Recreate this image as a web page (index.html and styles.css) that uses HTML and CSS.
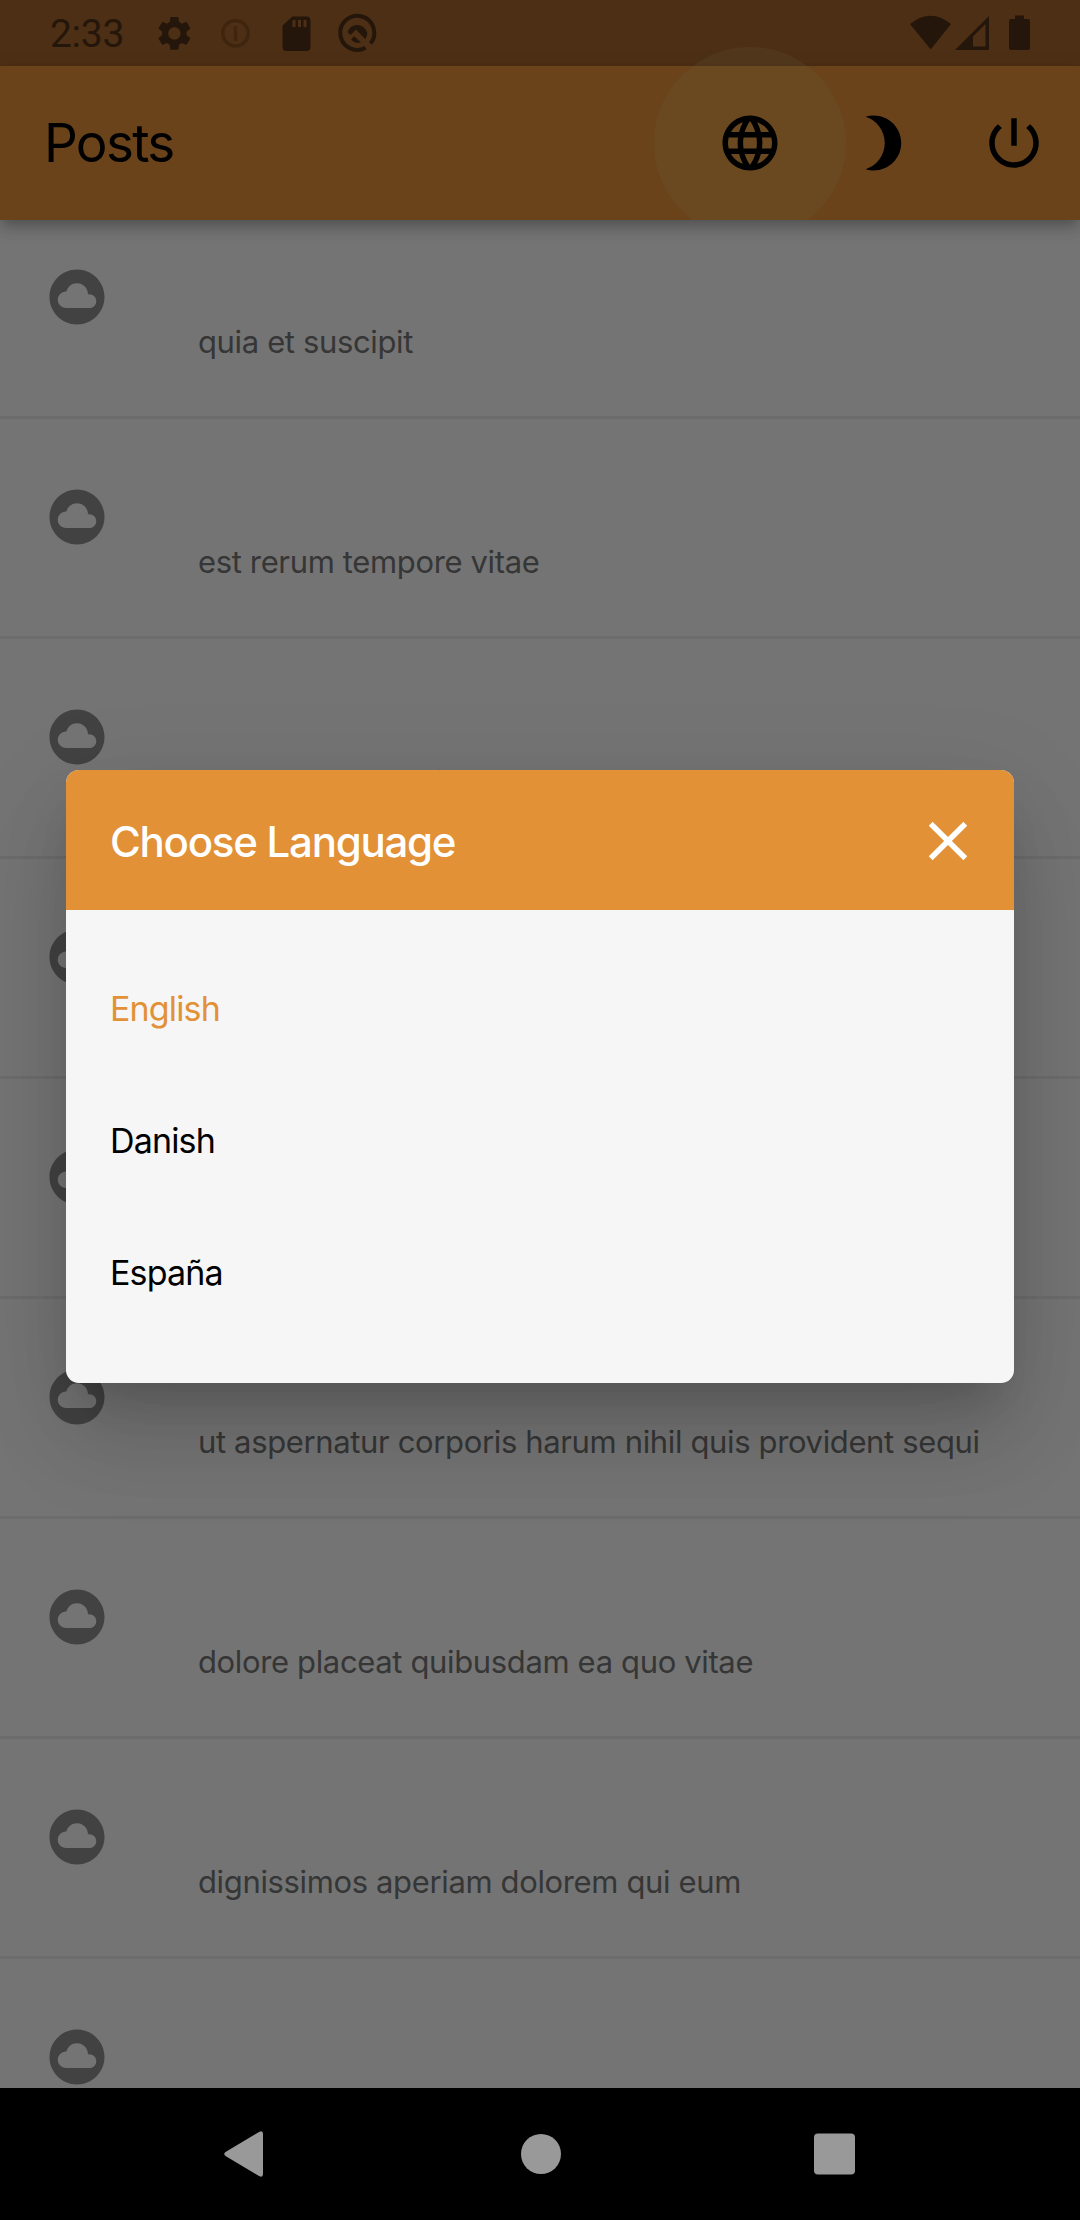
FILE: index.html
```html
<!DOCTYPE html>
<html lang="en">
<head>
<meta charset="utf-8">
<title>Posts</title>
<link rel="stylesheet" href="styles.css">
</head>
<body>
<svg class="defs" aria-hidden="true">
  <symbol id="cloud" viewBox="0 0 24 24"><path d="M12 2C6.48 2 2 6.48 2 12s4.48 10 10 10 10-4.48 10-10S17.52 2 12 2zm4.5 14H8c-1.66 0-3-1.34-3-3s1.34-3 3-3l.14.01C8.58 8.28 10.13 7 12 7c2.21 0 4 1.79 4 4h.5c1.38 0 2.5 1.12 2.5 2.5S17.88 16 16.5 16z"/></symbol>
</svg>
<div class="screen">
  <header class="status-bar">
    <span class="clock">2:33</span>
    <svg class="status-left" width="250" height="66" viewBox="0 0 250 66">
      <g transform="translate(14 13) scale(1.7)">
        <path d="M19.14 12.94c.04-.3.06-.61.06-.94 0-.32-.02-.64-.07-.94l2.03-1.58c.18-.14.23-.41.12-.61l-1.92-3.32c-.12-.22-.37-.29-.59-.22l-2.39.96c-.5-.38-1.03-.7-1.62-.94l-.36-2.54c-.04-.24-.24-.41-.48-.41h-3.84c-.24 0-.43.17-.47.41l-.36 2.54c-.59.24-1.13.57-1.62.94l-2.39-.96c-.22-.08-.47 0-.59.22L2.74 8.87c-.12.21-.08.47.12.61l2.03 1.58c-.05.3-.09.63-.09.94s.02.64.07.94l-2.03 1.58c-.18.14-.23.41-.12.61l1.92 3.32c.12.22.37.29.59.22l2.39-.96c.5.38 1.03.7 1.62.94l.36 2.54c.05.24.24.41.48.41h3.84c.24 0 .44-.17.47-.41l.36-2.54c.59-.24 1.13-.56 1.62-.94l2.39.96c.22.08.47 0 .59-.22l1.92-3.32c.12-.22.07-.47-.12-.61l-2.01-1.58zM12 15.6c-1.98 0-3.6-1.62-3.6-3.6s1.62-3.6 3.6-3.6 3.6 1.62 3.6 3.6-1.62 3.6-3.6 3.6z"/>
      </g>
      <g class="faint">
        <circle cx="95.5" cy="33.3" r="12.7"/>
        <path d="M95.5 26v3M95.5 29.500v11.500"/>
      </g>
      <path d="M152.5 16.5h14a4 4 0 0 1 4 4v26.5a4 4 0 0 1-4 4h-20a4 4 0 0 1-4-4v-21.500zM152.500 20v7h3v-7zM158 20v7h3v-7zM163.500 20v7h3v-7z" fill-rule="evenodd"/>
      <g transform="translate(217 33)">
        <path class="ring" d="M13.500 10.500A17 17 0 1 0 8.500 14.700"/>
        <path d="M-9.500-1A10.300 10.300 0 0 1 10.300 0 10.300 10.300 0 0 1 8.300 6.200L-1-3.500-6.500 2zM-6 6.500L-2.800 3.300 4 9.500A10.300 10.300 0 0 1-6 6.500z"/>
      </g>
    </svg>
    <svg class="status-right" width="130" height="66" viewBox="0 0 130 66">
      <path d="M0 24Q20.500 7.500 41 24L20.700 49.500z"/>
      <path d="M79 16v34H45zM75.500 24L63 36.500V46.500h12.500z" fill-rule="evenodd"/>
      <path d="M105 15.500h9v3.500h4a2 2 0 0 1 2 2v27a2 2 0 0 1-2 2h-17a2 2 0 0 1-2-2v-27a2 2 0 0 1 2-2h4z"/>
    </svg>
  </header>
  <nav class="app-bar">
    <h1 class="app-title">Posts</h1>
    <button class="action pressed" aria-label="Language">
      <svg viewBox="0 0 24 24"><path d="M11.99 2C6.47 2 2 6.48 2 12s4.47 10 9.99 10C17.52 22 22 17.52 22 12S17.52 2 11.99 2zm6.93 6h-2.950c-.32-1.25-.78-2.450-1.380-3.560 1.840.63 3.370 1.910 4.330 3.560zM12 4.040c.83 1.200 1.480 2.530 1.910 3.960h-3.820c.43-1.430 1.080-2.760 1.910-3.960zM4.260 14C4.100 13.360 4 12.690 4 12s.1-1.360.26-2h3.380c-.08.66-.14 1.320-.14 2 0 .68.06 1.340.14 2H4.260zm.82 2h2.950c.32 1.250.78 2.450 1.380 3.560-1.840-.63-3.370-1.900-4.330-3.560zm2.950-8H5.080c.96-1.660 2.490-2.930 4.330-3.560C8.810 5.550 8.350 6.750 8.030 8zM12 19.960c-.83-1.200-1.480-2.530-1.910-3.960h3.820c-.43 1.430-1.080 2.760-1.910 3.960zM14.340 14H9.660c-.09-.66-.16-1.320-.16-2 0-.68.07-1.350.16-2h4.680c.09.65.16 1.320.16 2 0 .68-.07 1.340-.16 2zm.25 5.560c.6-1.110 1.060-2.310 1.380-3.560h2.950c-.96 1.650-2.490 2.930-4.330 3.560zM16.360 14c.08-.66.14-1.320.14-2 0-.68-.06-1.340-.14-2h3.380c.16.64.26 1.310.26 2s-.1 1.360-.26 2h-3.380z"/></svg>
    </button>
    <button class="action" aria-label="Dark mode">
      <svg viewBox="0 0 24 24"><path d="M9 2c-1.050 0-2.050.16-3 .46 4.060 1.270 7 5.060 7 9.540 0 4.480-2.940 8.270-7 9.540.95.3 1.950.46 3 .46 5.520 0 10-4.480 10-10S14.520 2 9 2z"/></svg>
    </button>
    <button class="action" aria-label="Log out">
      <svg viewBox="0 0 24 24"><path d="M13 3h-2v10h2V3zm4.830 2.170l-1.420 1.420C17.990 7.860 19 9.810 19 12c0 3.870-3.130 7-7 7s-7-3.130-7-7c0-2.190 1.010-4.140 2.580-5.420L6.170 5.170C4.230 6.820 3 9.260 3 12c0 4.970 4.030 9 9 9s9-4.030 9-9c0-2.740-1.230-5.180-3.170-6.830z"/></svg>
    </button>
  </nav>
  <main class="content">
    <ul class="posts">
      <li class="post"><svg class="avatar"><use href="#cloud"/></svg><span>quia et suscipit</span></li>
      <li class="post"><svg class="avatar"><use href="#cloud"/></svg><span>est rerum tempore vitae</span></li>
      <li class="post"><svg class="avatar"><use href="#cloud"/></svg><span>et iusto sed quo iure</span></li>
      <li class="post"><svg class="avatar"><use href="#cloud"/></svg></li>
      <li class="post"><svg class="avatar"><use href="#cloud"/></svg></li>
      <li class="post"><svg class="avatar"><use href="#cloud"/></svg><span>ut aspernatur corporis harum nihil quis provident sequi</span></li>
      <li class="post"><svg class="avatar"><use href="#cloud"/></svg><span>dolore placeat quibusdam ea quo vitae</span></li>
      <li class="post"><svg class="avatar"><use href="#cloud"/></svg><span>dignissimos aperiam dolorem qui eum</span></li>
      <li class="post"><svg class="avatar"><use href="#cloud"/></svg></li>
    </ul>
  </main>
  <footer class="nav-bar">
    <svg viewBox="0 0 66 66"><path d="M11.500 31L45 11Q49 9 49 13V53Q49 57 45 55L11.500 35Q9 33 11.500 31z"/></svg>
    <svg viewBox="0 0 66 66"><circle cx="33" cy="33" r="20"/></svg>
    <svg viewBox="0 0 66 66"><rect x="13" y="12.500" width="41" height="41" rx="4"/></svg>
  </footer>
  <section class="dialog" role="dialog" aria-label="Choose Language">
    <header class="dialog-header">
      <h2>Choose Language</h2>
      <svg viewBox="0 0 24 24"><path d="M19 6.410L17.590 5 12 10.590 6.410 5 5 6.410 10.590 12 5 17.590 6.410 19 12 13.410 17.590 19 19 17.590 13.410 12z"/></svg>
    </header>
    <ul class="languages">
      <li class="selected">English</li>
      <li>Danish</li>
      <li>España</li>
    </ul>
  </section>
</div>
</body>
</html>
```
FILE: styles.css
```css
* { box-sizing: border-box; }

body {
  margin: 0;
  background: #000;
  font-family: Inter, "Liberation Sans", sans-serif;
}

h1, h2, ul { margin: 0; padding: 0; font-weight: 400; list-style: none; }

.defs { display: none; }

.screen {
  position: relative;
  display: flex;
  flex-direction: column;
  width: 1080px;
  height: 2220px;
  overflow: hidden;
  background: #747474;
}

/* Status bar */
.status-bar {
  display: flex;
  flex: none;
  align-items: center;
  height: 66px;
  padding: 0 40px 0 50px;
  background: #4d2f15;
  color: #24160a;
  fill: #24160a;
}
.clock {
  width: 90px;
  padding-top: 2px;
  font: 400 39px/64px Roboto, sans-serif;
  letter-spacing: -.3px;
}
.status-right { margin-left: auto; }
.faint { fill: none; stroke: #3f250d; stroke-width: 3.4; }
.ring { fill: none; stroke: #24160a; stroke-width: 4; }

/* App bar */
.app-bar {
  position: relative;
  z-index: 1;
  display: flex;
  flex: none;
  align-items: center;
  height: 154px;
  padding-left: 44px;
  background: #6a431b;
  box-shadow: 0 5px 11px -3px rgba(0, 0, 0, .2), 0 11px 14px rgba(0, 0, 0, .1), 0 3px 20px rgba(0, 0, 0, .09);
  clip-path: inset(-30px 0 -50px 0);
}
.app-title {
  margin-right: auto;
  font-size: 53px;
  letter-spacing: -1.7px;
  color: #000;
}
.action {
  position: relative;
  display: grid;
  place-items: center;
  width: 132px;
  height: 154px;
  padding: 0;
  border: 0;
  background: none;
}
.action svg { position: relative; width: 66px; height: 66px; fill: #000; }
.pressed::before {
  content: "";
  position: absolute;
  left: -30px;
  top: -19px;
  width: 192px;
  height: 192px;
  border-radius: 50%;
  background: #6a6a4c;
  opacity: .15;
  clip-path: inset(0 0 19px 0);
}

/* Post list */
.content {
  flex: 1;
  overflow: hidden;
}
.posts { margin-top: -21px; }
.post {
  display: grid;
  grid-template-columns: 154px 1fr;
  align-items: start;
  height: 220px;
  padding: 65px 0 0 44px;
  border-bottom: 3px solid #6c6c6c;
}
.post span {
  padding-top: 58px;
  font-size: 31px;
  line-height: 40px;
  letter-spacing: -.36px;
  color: #363636;
  white-space: nowrap;
}
.avatar { width: 66px; height: 66px; fill: #424242; }

/* System navigation */
.nav-bar {
  display: flex;
  flex: none;
  justify-content: space-between;
  align-items: center;
  height: 132px;
  padding: 0 213px 0 214px;
  background: #000;
  fill: #999;
}
.nav-bar svg { width: 66px; height: 66px; }

/* Language dialog, floating above the screen */
.dialog {
  position: absolute;
  z-index: 2;
  left: 66px;
  top: 770px;
  width: 948px;
  height: 613px;
  border-radius: 13px;
  background: #f6f6f6;
  box-shadow: 0 30px 41px -19px rgba(0, 0, 0, .16), 0 62px 90px 0 rgba(0, 0, 0, .1), 0 25px 100px 10px rgba(0, 0, 0, .08);
}
.dialog-header {
  display: flex;
  justify-content: space-between;
  align-items: center;
  height: 140px;
  padding: 2px 33px 0 44px;
  border-radius: 13px 13px 0 0;
  background: #e29137;
  color: #fff;
}
.dialog-header h2 { font-size: 42px; font-weight: 500; letter-spacing: -1.25px; }
.dialog-header svg { width: 66px; height: 66px; fill: #fff; }
.languages { padding: 33px 44px 0; }
.languages li { font-size: 34px; line-height: 132px; letter-spacing: -.85px; color: #000; }
.languages .selected { color: #e29137; }
```
